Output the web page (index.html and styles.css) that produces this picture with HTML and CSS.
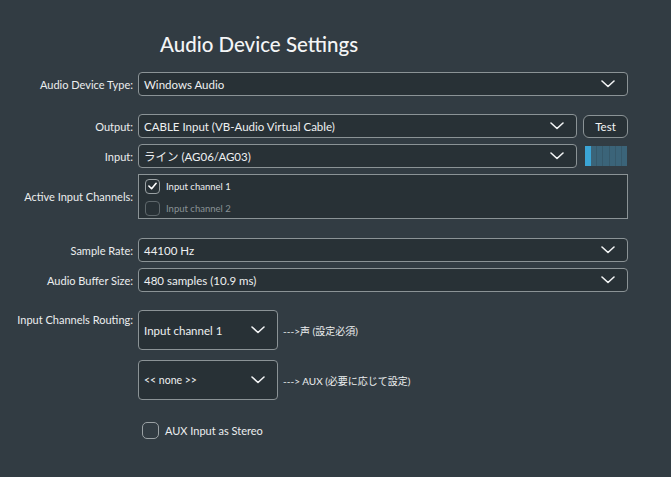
FILE: index.html
```html
<!DOCTYPE html>
<html>
<head>
<meta charset="utf-8">
<link rel="stylesheet" href="styles.css">
</head>
<body>
<div class="page">
  <h1 class="title">Audio Device Settings</h1>

  <div class="row r-type">
    <div class="label">Audio Device Type:</div>
    <div class="combo full"><span>Windows Audio</span><svg class="chev" viewBox="0 0 14 8"><polyline points="1,1 7,6.5 13,1"/></svg></div>
  </div>

  <div class="row r-out">
    <div class="label">Output:</div>
    <div class="combo part"><span>CABLE Input (VB-Audio Virtual Cable)</span><svg class="chev" viewBox="0 0 14 8"><polyline points="1,1 7,6.5 13,1"/></svg></div>
    <div class="btn">Test</div>
  </div>

  <div class="row r-in">
    <div class="label">Input:</div>
    <div class="combo part"><span>ライン (AG06/AG03)</span><svg class="chev" viewBox="0 0 14 8"><polyline points="1,1 7,6.5 13,1"/></svg></div>
    <div class="meter"><i class="on"></i><i></i><i></i><i></i><i></i><i></i><i></i></div>
  </div>

  <div class="row r-chan">
    <div class="label mid">Active Input Channels:</div>
    <div class="chanbox">
      <div class="chk"><span class="box checked"><svg viewBox="0 0 10 8"><polyline points="1,4 4,7 9,1"/></svg></span><span class="ctext">Input channel 1</span></div>
      <div class="chk dim"><span class="box"></span><span class="ctext">Input channel 2</span></div>
    </div>
  </div>

  <div class="row r-rate">
    <div class="label">Sample Rate:</div>
    <div class="combo full"><span>44100 Hz</span><svg class="chev" viewBox="0 0 14 8"><polyline points="1,1 7,6.5 13,1"/></svg></div>
  </div>

  <div class="row r-buf">
    <div class="label">Audio Buffer Size:</div>
    <div class="combo full"><span>480 samples (10.9 ms)</span><svg class="chev" viewBox="0 0 14 8"><polyline points="1,1 7,6.5 13,1"/></svg></div>
  </div>

  <div class="row r-route">
    <div class="label top">Input Channels Routing:</div>
    <div class="routes">
      <div class="route">
        <div class="combo big"><span>Input channel 1</span><svg class="chev" viewBox="0 0 14 8"><polyline points="1,1 7,6.5 13,1"/></svg></div>
        <span class="rtext">---&gt;声 (設定必須)</span>
      </div>
      <div class="route r2">
        <div class="combo big"><span class="small">&lt;&lt; none &gt;&gt;</span><svg class="chev" viewBox="0 0 14 8"><polyline points="1,1 7,6.5 13,1"/></svg></div>
        <span class="rtext">---&gt; AUX (必要に応じて設定)</span>
      </div>
      <div class="stereo"><span class="box lg"></span><span class="stext">AUX Input as Stereo</span></div>
    </div>
  </div>
</div>
</body>
</html>
```
FILE: styles.css
```css
* { box-sizing: border-box; }
html, body { margin: 0; padding: 0; }
body {
  background: #323c43;
  color: #eceeef;
  font-family: "Source Sans Pro", Lato, "Noto Sans CJK JP", sans-serif;
  width: 671px;
  height: 477px;
  overflow: hidden;
}
.page { padding-top: 30px; }
.title {
  margin: 0 0 0 160px;
  font-size: 20.5px;
  font-weight: 500;
  line-height: 28px;
  color: #f4f5f6;
}
.row { display: flex; align-items: center; }
.label {
  width: 138px;
  padding-right: 5px;
  text-align: right;
  font-size: 11px;
  color: #eceeef;
  flex: none;
}
.label.top { align-self: flex-start; padding-top: 3px; }
.r-type { margin-top: 14px; }
.r-out { margin-top: 18px; }
.r-in { margin-top: 6px; }
.r-chan { margin-top: 6px; }
.r-rate { margin-top: 19px; }
.r-buf { margin-top: 6px; }
.r-route { margin-top: 18px; align-items: flex-start; }

.combo {
  height: 24px;
  background: #283136;
  border: 1px solid #8b9396;
  border-radius: 4px;
  display: flex;
  align-items: center;
  justify-content: space-between;
  padding: 0 12px 0 5px;
  font-size: 11.5px;
  color: #eef0f1;
  flex: none;
}
.combo.full { width: 490px; }
.combo.part { width: 439px; }
.combo.big { width: 140px; height: 40px; padding-right: 12px; }
.combo .small { font-size: 10.5px; }
.chev { width: 14px; height: 8px; fill: none; stroke: #f2f4f5; stroke-width: 1.6; stroke-linecap: round; stroke-linejoin: round; }

.btn {
  margin-left: 6px;
  width: 45px;
  height: 23px;
  border: 1px solid #8b9396;
  border-radius: 6px;
  background: #283136;
  font-size: 11.5px;
  display: flex;
  align-items: center;
  justify-content: center;
  color: #f2f4f5;
}
.meter {
  margin-left: 8px;
  width: 42px;
  height: 20px;
  display: flex;
  background: #3b6479;
}
.meter i { flex: 1; border-right: 1px solid #36596b; }
.meter i.on { flex: none; width: 6px; background: #3ba5d6; border-right: none; }
.meter i:last-child { border-right: none; }

.label.mid { align-self: center; }
.chanbox {
  width: 490px;
  height: 45px;
  border: 1px solid #8b9396;
  background: #283136;
  padding: 3px 0 0 6px;
}
.chk { display: flex; align-items: center; height: 16px; margin-bottom: 6px; }
.box {
  width: 15px;
  height: 15px;
  border: 1px solid #9aa1a4;
  border-radius: 4px;
  display: inline-flex;
  align-items: center;
  justify-content: center;
  flex: none;
}
.box svg { width: 9px; height: 8px; fill: none; stroke: #ffffff; stroke-width: 1.8; stroke-linecap: round; stroke-linejoin: round; }
.ctext { margin-left: 6px; font-size: 9.5px; color: #eceeef; }
.chk.dim .box { border-color: #5f686c; }
.chk.dim .ctext { color: #899195; }

.routes { display: flex; flex-direction: column; }
.route { display: flex; align-items: center; }
.route.r2 { margin-top: 10px; }
.rtext { margin-left: 5px; font-size: 10px; font-family: Lato, "Noto Sans CJK JP", sans-serif; color: #eceeef; }
.stereo { display: flex; align-items: center; margin: 22px 0 0 4px; }
.box.lg { width: 17px; height: 17px; border-radius: 5px; border-color: #9aa1a4; }
.stext { margin-left: 6px; font-size: 11px; color: #eceeef; }
```
